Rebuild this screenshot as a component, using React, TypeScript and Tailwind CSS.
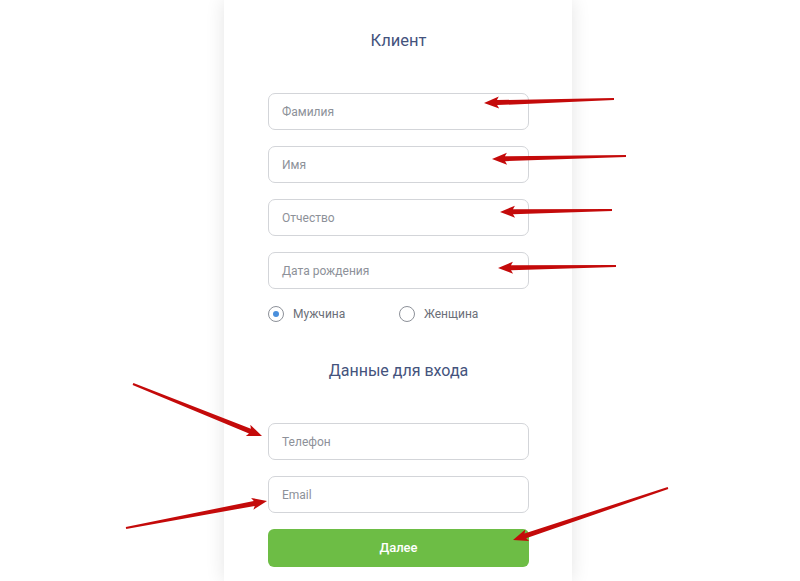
import React from 'react';

type Arrow = { from: [number, number]; to: [number, number] };

const arrows: Arrow[] = [
  { from: [614, 99], to: [484, 103] },
  { from: [626, 156], to: [492, 159] },
  { from: [612, 210], to: [500, 212] },
  { from: [616, 266], to: [498, 268] },
  { from: [133, 384], to: [262, 436] },
  { from: [126, 528], to: [267, 501] },
  { from: [668, 488], to: [513, 540] },
];

// tapered shaft + head, built from the two end points
const arrowPoints = ({ from, to }: Arrow) => {
  const [x1, y1] = from;
  const [x2, y2] = to;
  const len = Math.hypot(x2 - x1, y2 - y1);
  const ux = (x2 - x1) / len;
  const uy = (y2 - y1) / len;
  const nx = -uy;
  const ny = ux;
  const headLen = 13;
  const bx = x2 - ux * headLen;
  const by = y2 - uy * headLen;
  const p = (x: number, y: number) => `${x.toFixed(1)},${y.toFixed(1)}`;
  return [
    p(x1 + nx * 1.1, y1 + ny * 1.1),
    p(bx + nx * 2.5, by + ny * 2.5),
    p(bx + nx * 6 - ux * 2, by + ny * 6 - uy * 2),
    p(x2, y2),
    p(bx - nx * 6 - ux * 2, by - ny * 6 - uy * 2),
    p(bx - nx * 2.5, by - ny * 2.5),
    p(x1 - nx * 1.1, y1 - ny * 1.1),
  ].join(' ');
};

const Field = ({ label }: { label: string }) => (
  <div className="h-[37px] w-full rounded-[7px] border border-[#d3d5d9] bg-white flex items-center px-[13px] text-[12px] text-[#8d9199]">
    {label}
  </div>
);

const Radio = ({ label, checked }: { label: string; checked?: boolean }) => (
  <div className="flex items-center gap-[9px]">
    <span className="w-[16px] h-[16px] rounded-full border border-[#8d9199] flex items-center justify-center">
      {checked && <span className="w-[6px] h-[6px] rounded-full bg-[#4a8fdc]" />}
    </span>
    <span className="text-[12px] text-[#6b6f78]">{label}</span>
  </div>
);

export default function App() {
  return (
    <div
      className="relative h-[581px] w-[800px] overflow-hidden bg-white"
      style={{ fontFamily: 'Roboto, "Liberation Sans", sans-serif' }}
    >
      <div className="flex justify-center pr-1 h-full">
        <div className="w-[348px] h-full bg-white shadow-[0_0_18px_rgba(0,0,0,0.11)] pl-[44px] pr-[43px] pt-[29px]">
          <h2 className="text-center text-[16.5px] leading-[24px] text-[#44537d]">Клиент</h2>
          <div className="mt-[40px] flex flex-col gap-4">
            <Field label="Фамилия" />
            <Field label="Имя" />
            <Field label="Отчество" />
            <Field label="Дата рождения" />
          </div>
          <div className="mt-4 flex items-center">
            <div className="w-[131px]">
              <Radio label="Мужчина" checked />
            </div>
            <Radio label="Женщина" />
          </div>
          <h2 className="mt-[36px] text-center text-[16px] leading-[24px] text-[#44537d]">
            Данные для входа
          </h2>
          <div className="mt-[40px] flex flex-col gap-4">
            <Field label="Телефон" />
            <Field label="Email" />
            <button className="h-[38px] w-full rounded-[6px] bg-[#6dbd45] text-white text-[13px] font-medium">
              Далее
            </button>
          </div>
        </div>
      </div>
      <svg className="absolute inset-0 pointer-events-none" width="800" height="581">
        {arrows.map((a, i) => (
          <polygon key={i} points={arrowPoints(a)} fill="#c40a0a" />
        ))}
      </svg>
    </div>
  );
}
